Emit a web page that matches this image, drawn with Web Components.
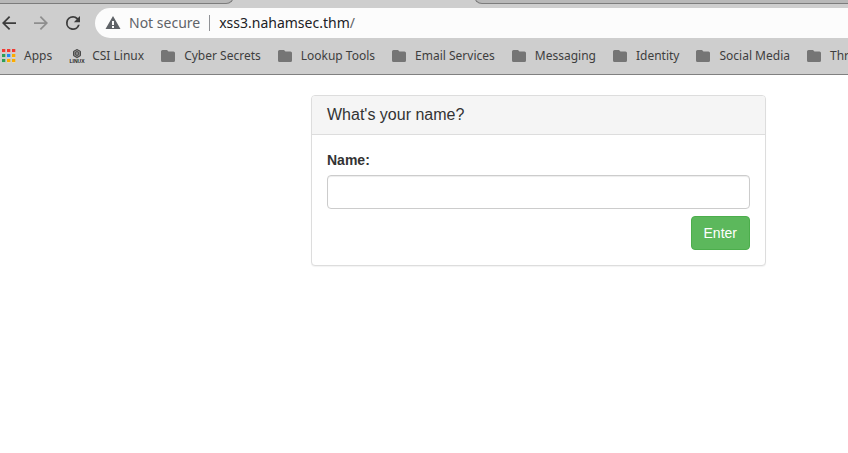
<!DOCTYPE html>
<html lang="en">
<head>
<meta charset="utf-8">
<title>What's your name?</title>
<style>
html, body { margin: 0; background: #fff; }
body { min-height: 100vh; overflow-x: hidden; }
</style>
</head>
<body>
<browser-chrome>
  <tab-strip slot="tabs"></tab-strip>
  <nav-toolbar slot="toolbar"></nav-toolbar>
  <bookmarks-bar slot="bookmarks">
    <bookmark-item icon="apps">Apps</bookmark-item>
    <bookmark-item icon="linux">CSI Linux</bookmark-item>
    <bookmark-item>Cyber Secrets</bookmark-item>
    <bookmark-item>Lookup Tools</bookmark-item>
    <bookmark-item>Email Services</bookmark-item>
    <bookmark-item>Messaging</bookmark-item>
    <bookmark-item>Identity</bookmark-item>
    <bookmark-item>Social Media</bookmark-item>
    <bookmark-item>Thr</bookmark-item>
  </bookmarks-bar>
</browser-chrome>
<page-layout>
  <form-panel heading="What's your name?"><name-form></name-form></form-panel>
</page-layout>
<script>
const define = (name, html, setup) => {
  const template = document.createElement('template');
  template.innerHTML = html;
  customElements.define(name, class extends HTMLElement {
    constructor() {
      super();
      this.attachShadow({ mode: 'open' }).append(template.content.cloneNode(true));
    }
    connectedCallback() { if (setup) setup(this, this.shadowRoot); }
  });
};

define('browser-chrome', `
<style>
  :host { display: block; background: #cecece; border-bottom: 1px solid #808080; font-family: "Noto Sans", sans-serif; overflow: hidden; }
</style>
<header><slot name="tabs"></slot><slot name="toolbar"></slot><slot name="bookmarks"></slot></header>`);

define('tab-strip', `
<style>
  :host { display: grid; grid-template-columns: 234px 240px 1fr; height: 4px; overflow: hidden; }
  .tab { box-sizing: border-box; height: 12px; margin-top: -8px; background: #b8b8b8; border-bottom: 1px solid #7c7c7c; }
  .left { border-right: 1px solid #7c7c7c; border-bottom-right-radius: 8px; }
  .right { border-left: 1px solid #7c7c7c; border-bottom-left-radius: 8px; }
</style>
<div class="tab left"></div><div></div><div class="tab right"></div>`);

define('nav-toolbar', `
<style>
  :host { display: flex; align-items: center; padding-top: 4px; }
  nav { display: flex; gap: 16px; flex: none; width: 95px; }
  button { appearance: none; border: 0; margin: 0; padding: 0; width: 16px; height: 16px; background: none; color: #3c3c3c; }
  button:disabled { color: #8e8e8e; }
  svg { display: block; }
  address-bar { flex: 1; }
</style>
<nav aria-label="Navigation">
  <button aria-label="Back"><svg width="16" height="16" viewBox="0 0 16 16" fill="currentColor"><path transform="translate(2 1) scale(.875) translate(-4 -4)" d="M20 11H7.830l5.590-5.590L12 4l-8 8 8 8 1.410-1.410L7.830 13H20z"/></svg></button>
  <button aria-label="Forward" disabled><svg width="16" height="16" viewBox="0 0 16 16" fill="currentColor"><path transform="translate(2 1) scale(.875) translate(-4 -4)" d="m12 4-1.410 1.410L16.170 11H4v2h12.170l-5.580 5.590L12 20l8-8z"/></svg></button>
  <button aria-label="Reload"><svg width="16" height="16" viewBox="0 0 16 16" fill="currentColor"><path transform="translate(2 1) scale(.875) translate(-4 -4)" d="M17.650 6.350A7.960 7.960 0 0 0 12 4a8 8 0 1 0 7.730 10h-2.080A6 6 0 1 1 12 6c1.660 0 3.140.690 4.220 1.780L13 11h7V4z"/></svg></button>
</nav>
<address-bar></address-bar>`);

define('address-bar', `
<style>
  :host { display: flex; align-items: center; height: 30px; box-sizing: border-box; padding-left: 10px; background: #fcfcfc; border-radius: 15px 0 0 15px; font-size: 14px; line-height: 20px; color: #5f6368; white-space: nowrap; }
  button { display: flex; align-items: center; gap: 8px; appearance: none; border: 0; padding: 0; background: none; font: inherit; color: inherit; }
  hr { width: 1px; height: 16px; margin: 0 9px; border: 0; background: #909296; }
  input { field-sizing: content; border: 0; padding: 0; margin: 0; background: none; font: inherit; color: #202124; outline: 0; }
</style>
<button><svg width="16" height="16" viewBox="0 0 16 16"><path fill="#5f6368" fill-rule="evenodd" d="M8 1 15.500 14H.5zM7 6v4h2V6zM7 11v2h2v-2z"/></svg><span>Not secure</span></button>
<hr><input type="text" aria-label="Address" value="xss3.nahamsec.thm" spellcheck="false"><span>/</span>`);

define('bookmarks-bar', `
<style>
  :host { display: flex; align-items: center; gap: 16px; height: 36px; overflow: hidden; }
</style>
<slot></slot>`);

const icons = {
  folder: '<path fill="#757575" d="M2.500 2H7l1.500 1.500H13.500q1.500 0 1.500 1.500v7.500q0 1.500-1.500 1.500h-11Q1 14 1 12.500v-9Q1 2 2.500 2z"/>',
  apps: [['#f03a33','#f03a33','#f03a33'],['#2f9e57','#1e88f5','#fbab00'],['#2f9e57','#fbab00','#fbab00']]
    .map((row, y) => row.map((c, x) => `<rect x="${2 + x * 5}" y="${4 + y * 5}" width="3.300" height="1" fill="#e4e4e4"/><rect x="${2 + x * 5}" y="${1 + y * 5}" width="3.300" height="3.200" fill="${c}"/>`).join('')).join(''),
  linux: '<path fill="#8a8a8a" d="m9 1 4 2v5l-4 2.500L5 8V3z"/><path fill="none" stroke="#484848" d="M9 1.500 5.500 3.500v4L9 9.500l3.500-2v-4zM7.300 4.500 9 3.500l1.700 1v2L9 7.500l-1.700-1z"/><text x="9" y="15" text-anchor="middle" font-family="Liberation Sans, sans-serif" font-size="5" font-weight="700" fill="#262626">LINUX</text>'
};

define('bookmark-item', `
<style>
  :host { display: block; flex: none; font-size: 12px; line-height: 16px; color: #3e3e3e; }
  button { display: flex; align-items: center; gap: 8px; appearance: none; border: 0; padding: 0; background: none; font: inherit; color: inherit; white-space: nowrap; }
  svg { display: block; flex: none; overflow: visible; }
</style>
<button><svg width="16" height="16" viewBox="0 0 16 16"></svg><span><slot></slot></span></button>`,
(host, root) => { root.querySelector('svg').innerHTML = icons[host.getAttribute('icon') || 'folder']; });

define('page-layout', `
<style>
  :host { display: grid; grid-template-columns: 311fr 455fr 82fr; padding: 20px 0; font: 14px/20px "Liberation Sans", Arial, sans-serif; color: #333; }
  main { grid-column: 2; min-width: 0; }
</style>
<main><slot></slot></main>`);

define('form-panel', `
<style>
  :host { display: block; background: #fff; border: 1px solid #ddd; border-radius: 4px; box-shadow: 0 1px 1px rgba(0,0,0,.05); }
  header { padding: 10px 15px; background: #f5f5f5; border-bottom: 1px solid #ddd; border-radius: 3px 3px 0 0; }
  h3 { margin: 0; font-size: 16px; line-height: 18px; font-weight: 400; }
  .body { padding: 15px; }
</style>
<section><header><h3></h3></header><div class="body"><slot></slot></div></section>`,
(host, root) => { root.querySelector('h3').textContent = host.getAttribute('heading'); });

define('name-form', `
<style>
  :host { display: block; }
  form { display: flex; flex-direction: column; }
  label { font-weight: 700; margin-bottom: 5px; }
  input { box-sizing: border-box; width: 100%; height: 34px; padding: 6px 12px; border: 1px solid #ccc; border-radius: 4px; background: #fff; font: inherit; color: #555; box-shadow: inset 0 1px 1px rgba(0,0,0,.075); }
  button { align-self: flex-end; margin-top: 7px; padding: 6px 12px; border: 1px solid #4cae4c; border-radius: 4px; background: #5cb85c; color: #fff; font: inherit; }
</style>
<form onsubmit="return false"><label for="name">Name:</label><input id="name" type="text"><button type="submit">Enter</button></form>`);
</script>
</body>
</html>
